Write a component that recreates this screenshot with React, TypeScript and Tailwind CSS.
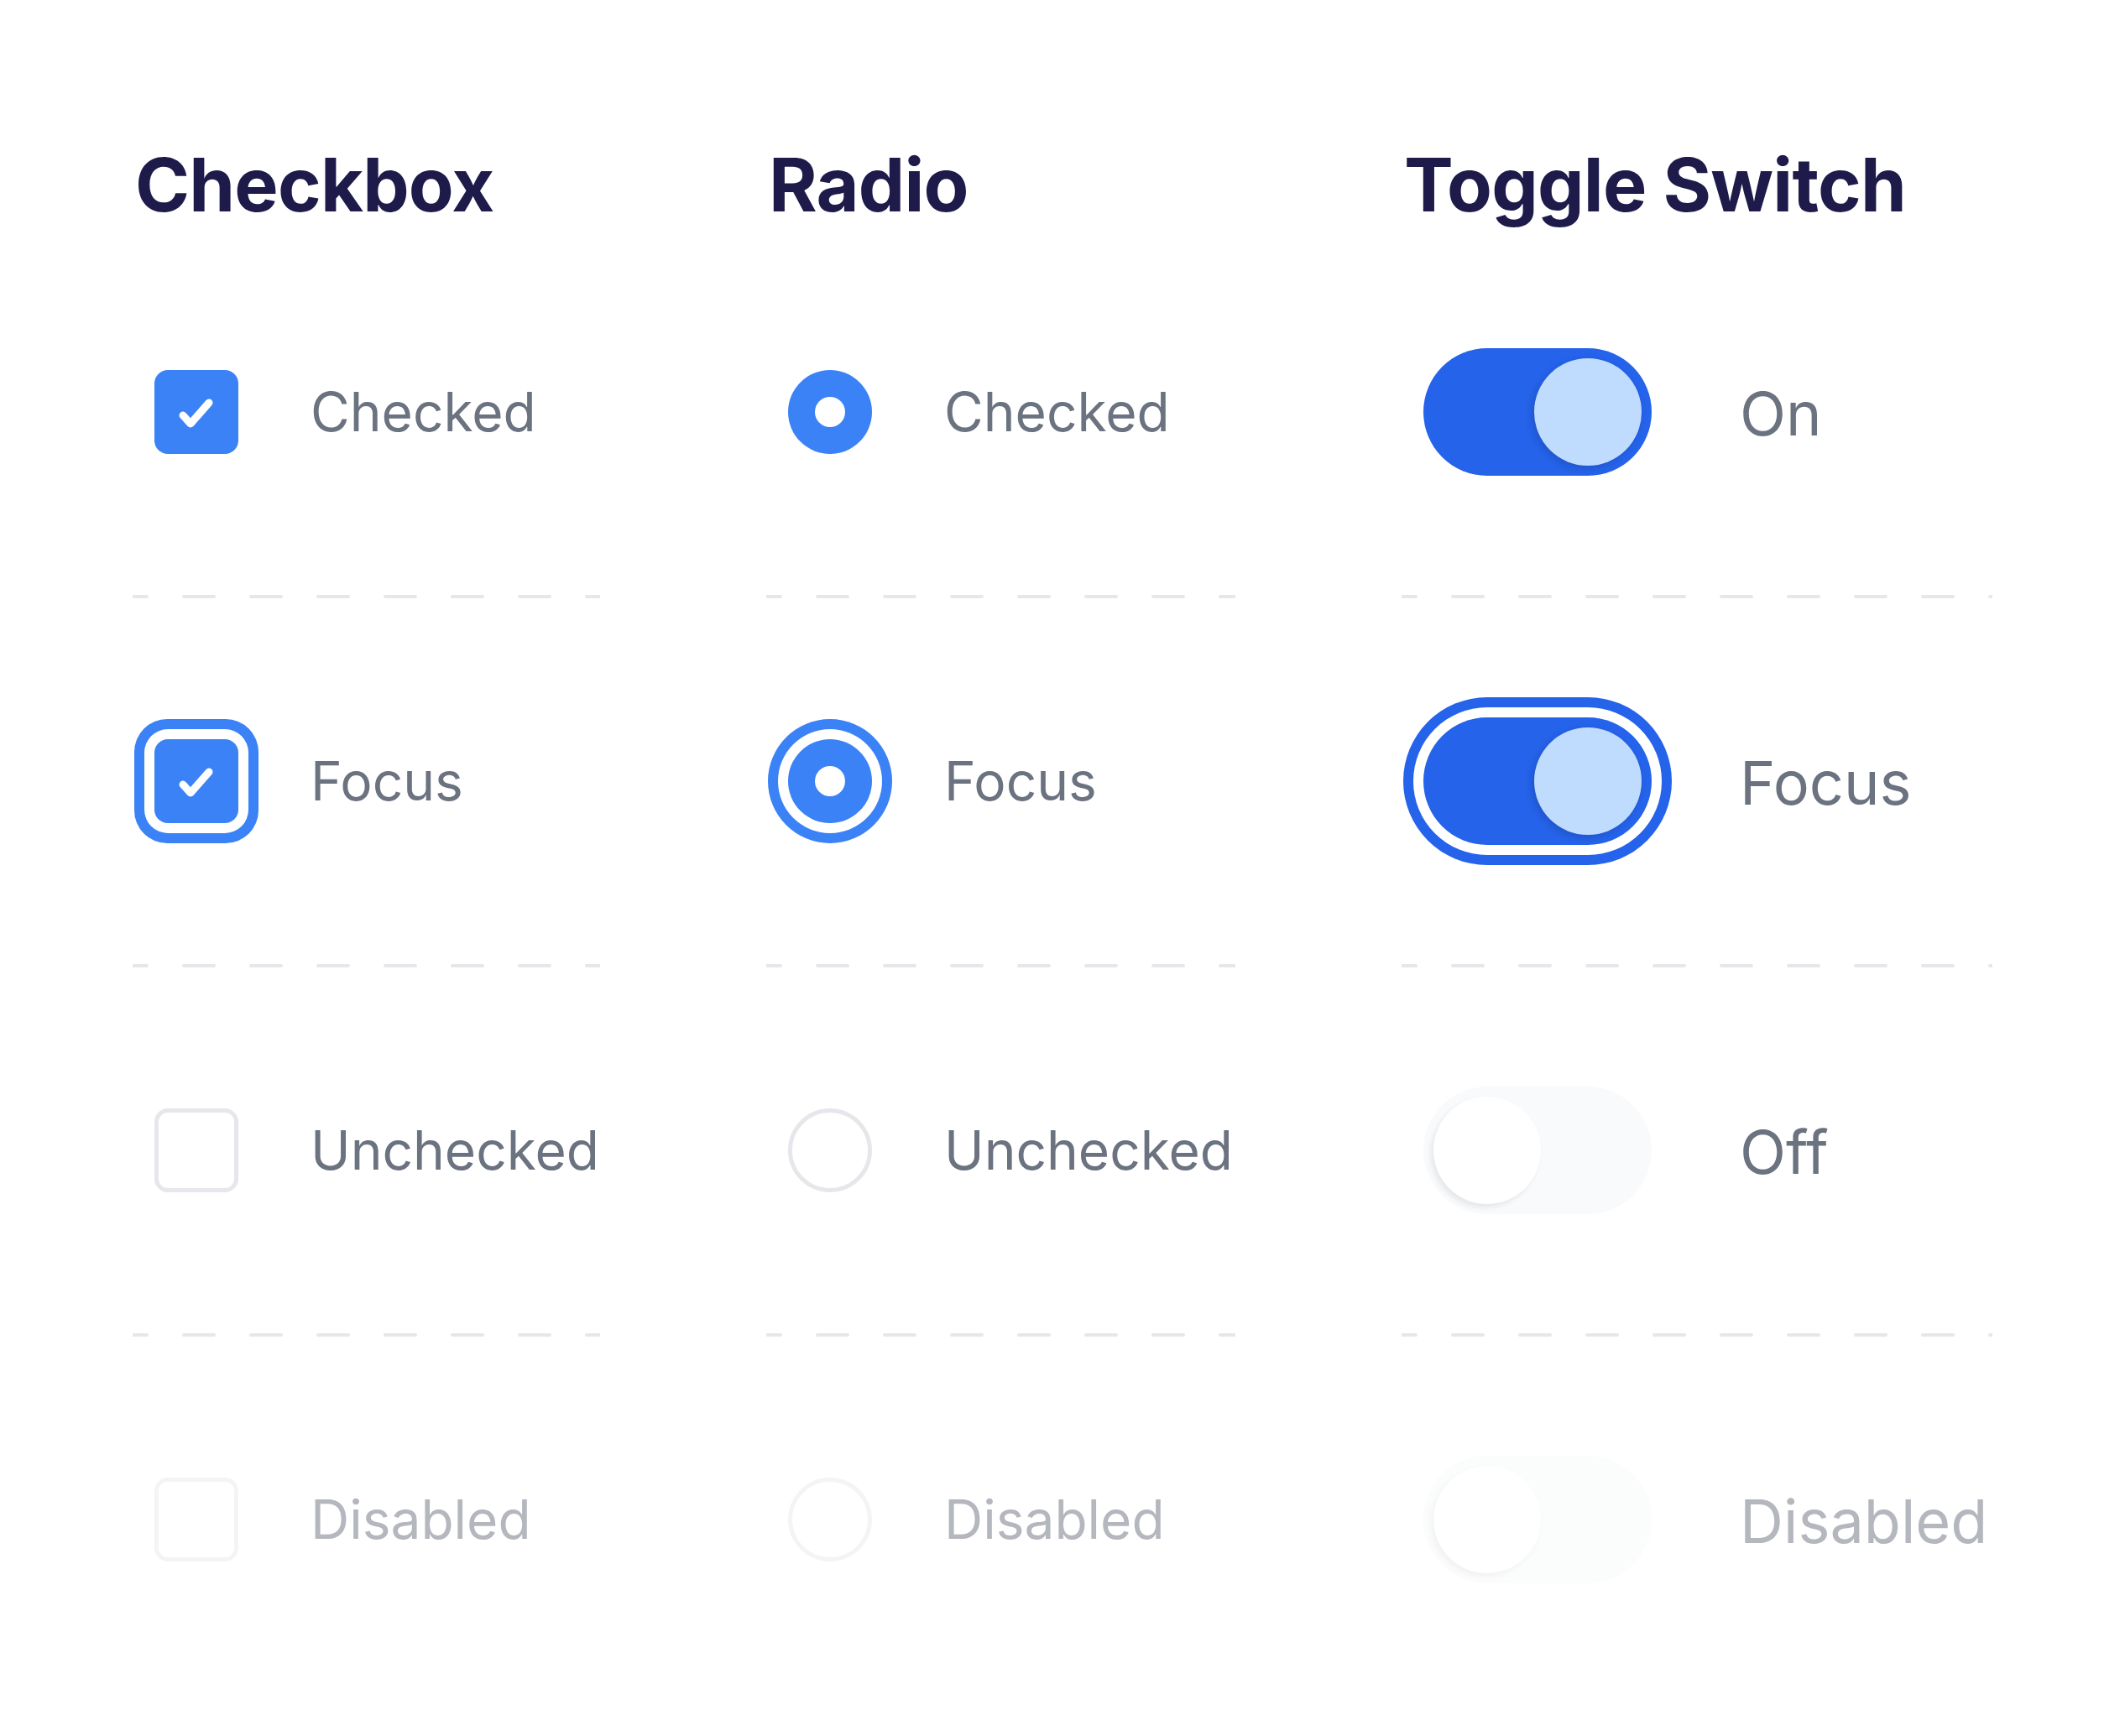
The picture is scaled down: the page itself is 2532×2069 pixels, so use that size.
import React from "react";

const FONT = { fontFamily: "Inter, 'Noto Sans', sans-serif" };

function Divider({ width }: { width: number }) {
  return (
    <svg width={width} height={4} className="block">
      <line
        x1={0}
        y1={2}
        x2={width}
        y2={2}
        stroke="#e5e7eb"
        strokeWidth={4}
        strokeLinecap="round"
        strokeDasharray="36 44"
        strokeDashoffset={19}
      />
    </svg>
  );
}

function Check() {
  return (
    <svg width={100} height={100} viewBox="0 0 100 100" className="block">
      <polyline
        points="34,54 43,64 65,39"
        fill="none"
        stroke="white"
        strokeWidth={9}
        strokeLinecap="round"
        strokeLinejoin="round"
      />
    </svg>
  );
}

type State = "checked" | "focus" | "unchecked" | "disabled";

function CheckboxCtl({ s }: { s: State }) {
  if (s === "checked")
    return (
      <div className="w-[100px] h-[100px] rounded-[16px] bg-[#3b82f6]">
        <Check />
      </div>
    );
  if (s === "focus")
    return (
      <div className="w-[100px] h-[100px] rounded-[16px] bg-[#3b82f6] shadow-[0_0_0_12px_#ffffff,0_0_0_24px_#3b82f6]">
        <Check />
      </div>
    );
  if (s === "unchecked")
    return <div className="w-[100px] h-[100px] rounded-[16px] bg-white border-[5px] border-[#e5e7eb]" />;
  return <div className="w-[100px] h-[100px] rounded-[16px] bg-white border-[5px] border-[#f3f4f6]" />;
}

function RadioCtl({ s }: { s: State }) {
  if (s === "checked")
    return (
      <div className="w-[100px] h-[100px] rounded-full bg-[#3b82f6] flex items-center justify-center">
        <div className="w-[36px] h-[36px] rounded-full bg-white" />
      </div>
    );
  if (s === "focus")
    return (
      <div className="w-[100px] h-[100px] rounded-full bg-[#3b82f6] flex items-center justify-center shadow-[0_0_0_12px_#ffffff,0_0_0_24px_#3b82f6]">
        <div className="w-[36px] h-[36px] rounded-full bg-white" />
      </div>
    );
  if (s === "unchecked")
    return <div className="w-[100px] h-[100px] rounded-full bg-white border-[5px] border-[#e5e7eb]" />;
  return <div className="w-[100px] h-[100px] rounded-full bg-white border-[5px] border-[#f3f4f6]" />;
}

function ToggleCtl({ s }: { s: State }) {
  if (s === "checked" || s === "focus")
    return (
      <div
        className={
          "w-[272px] h-[152px] rounded-full bg-[#2563eb] flex items-center justify-end pr-[12px] " +
          (s === "focus" ? "shadow-[0_0_0_12px_#ffffff,0_0_0_24px_#2563eb]" : "")
        }
      >
        <div className="w-[128px] h-[128px] rounded-full bg-[#bfdbfe] shadow-[-3px_3px_8px_rgba(15,23,42,0.18)]" />
      </div>
    );
  return (
    <div
      className={
        "w-[272px] h-[152px] rounded-full bg-[#f9fafb] flex items-center justify-start pl-[12px] " +
        (s === "disabled" ? "opacity-50" : "")
      }
    >
      <div className="w-[128px] h-[128px] rounded-full bg-white shadow-[-3px_4px_6px_rgba(0,0,0,0.08)]" />
    </div>
  );
}

const LABELS: Record<string, string[]> = {
  checkbox: ["Checked", "Focus", "Unchecked", "Disabled"],
  radio: ["Checked", "Focus", "Unchecked", "Disabled"],
  toggle: ["On", "Focus", "Off", "Disabled"],
};

const STATES: State[] = ["checked", "focus", "unchecked", "disabled"];

function Column({
  title,
  kind,
  width,
}: {
  title: string;
  kind: "checkbox" | "radio" | "toggle";
  width: number;
}) {
  const rows = STATES.map((s, i) => {
    const label = LABELS[kind][i];
    const color = s === "disabled" ? "text-[#b5b7bf]" : "text-[#6b7280]";
    return (
      <React.Fragment key={s}>
        {i > 0 && <Divider width={width} />}
        <div className="h-[436px] flex items-center pl-[26px]">
          {kind === "checkbox" && <CheckboxCtl s={s} />}
          {kind === "radio" && <RadioCtl s={s} />}
          {kind === "toggle" && <ToggleCtl s={s} />}
          {kind === "toggle" ? (
            <span className={"ml-[105px] text-[72px] leading-none pt-[4px] " + color}>{label}</span>
          ) : (
            <span className={"ml-[86px] text-[64px] leading-none " + color}>{label}</span>
          )}
        </div>
      </React.Fragment>
    );
  });
  return (
    <div className="flex flex-col">
      <div className="h-[273px] pt-[176px]">
        <h2 className="text-[88px] leading-none font-bold text-[#1e1b4b] tracking-[-0.8px] pl-[3px]">{title}</h2>
      </div>
      {rows}
    </div>
  );
}

export default function App() {
  return (
    <div className="w-[2532px] h-[2069px] bg-white px-[158px]" style={FONT}>
      <div className="grid grid-cols-[557px_559px_704px] gap-x-[198px]">
        <Column title="Checkbox" kind="checkbox" width={557} />
        <Column title="Radio" kind="radio" width={559} />
        <Column title="Toggle Switch" kind="toggle" width={704} />
      </div>
    </div>
  );
}
